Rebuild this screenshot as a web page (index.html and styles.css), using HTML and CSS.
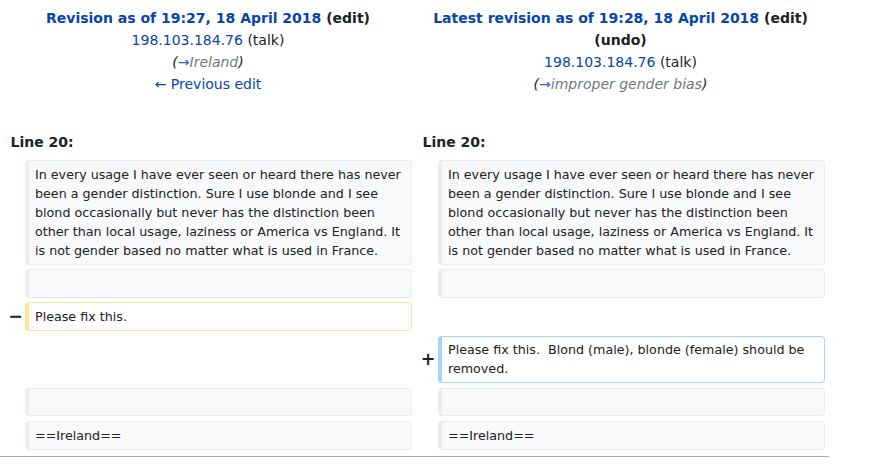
FILE: index.html
```
<!DOCTYPE html>
<html lang="en">
<head>
<meta charset="utf-8">
<title>Difference between revisions</title>
<link rel="stylesheet" href="styles.css">
</head>
<body>
<div class="diff">
  <div class="title">
    <div class="t-main"><a class="link" href="#">Revision as of 19:27, 18 April 2018</a> <span class="dark">(edit)</span></div>
    <div><a class="link" href="#">198.103.184.76</a> <span class="dark">(talk)</span></div>
    <div class="comment"><span class="dark">(</span><span class="arrow">→</span><span class="gray">Ireland</span><span class="dark">)</span></div>
    <div><a class="link" href="#">← Previous edit</a></div>
  </div>
  <div class="title">
    <div class="t-main"><a class="link" href="#">Latest revision as of 19:28, 18 April 2018</a> <span class="dark">(edit)</span></div>
    <div class="t-main"><span class="dark">(undo)</span></div>
    <div><a class="link" href="#">198.103.184.76</a> <span class="dark">(talk)</span></div>
    <div class="comment"><span class="dark">(</span><span class="arrow">→</span><span class="gray">improper gender bias</span><span class="dark">)</span></div>
  </div>

  <div class="lineno">Line 20:</div>
  <div class="lineno">Line 20:</div>

  <div class="marker"></div>
  <div class="cell context">In every usage I have ever seen or heard there has never been a gender distinction. Sure I use blonde and I see blond occasionally but never has the distinction been other than local usage, laziness or America vs England. It is not gender based no matter what is used in France.</div>
  <div class="marker"></div>
  <div class="cell context">In every usage I have ever seen or heard there has never been a gender distinction. Sure I use blonde and I see blond occasionally but never has the distinction been other than local usage, laziness or America vs England. It is not gender based no matter what is used in France.</div>

  <div class="marker"></div>
  <div class="cell context"><br></div>
  <div class="marker"></div>
  <div class="cell context"><br></div>

  <div class="marker marker-old">−</div>
  <div class="cell deleted">Please fix this.</div>
  <div class="marker"></div>
  <div class="empty"></div>

  <div class="marker"></div>
  <div class="empty"></div>
  <div class="marker marker-new">+</div>
  <div class="cell added">Please fix this.  Blond (male), blonde (female) should be removed.</div>

  <div class="marker"></div>
  <div class="cell context"><br></div>
  <div class="marker"></div>
  <div class="cell context"><br></div>

  <div class="marker"></div>
  <div class="cell context">==Ireland==</div>
  <div class="marker"></div>
  <div class="cell context">==Ireland==</div>
</div>
<div class="rule"></div>
</body>
</html>
```
FILE: styles.css
```
html, body {
  margin: 0;
  padding: 0;
  background: #ffffff;
}

body {
  font-family: "DejaVu Sans", "Liberation Sans", sans-serif;
  color: #202122;
  font-size: 14px;
}

.link {
  color: #0645ad;
  text-decoration: none;
}

.dark {
  color: #202122;
}

.diff {
  width: 821px;
  padding: 4px;
  display: grid;
  grid-template-columns: 17px 387px 18px 387px;
  column-gap: 4px;
  row-gap: 4.6px;
  align-items: center;
}

.title {
  grid-column: span 2;
  align-self: start;
  text-align: center;
  line-height: 22px;
  padding: 3px 0 31.4px;
}

.t-main {
  font-weight: bold;
}

.comment {
  font-style: italic;
}

.comment .arrow {
  color: #3366cc;
  font-style: normal;
}

.comment .gray {
  color: #72777d;
}

.lineno {
  grid-column: span 2;
  font-weight: bold;
  line-height: 22px;
  padding: 0 0 2.4px 6.5px;
}

.marker {
  font-weight: bold;
  font-size: 17.5px;
  line-height: 21px;
  text-align: right;
  margin-right: -2px;
}

.marker-new {
  margin-right: -1.5px;
}

.cell {
  box-sizing: border-box;
  font-size: 12.7px;
  line-height: 19px;
  white-space: pre-wrap;
  padding: 3.8px 6px;
  border-style: solid;
  border-width: 1px 1px 1px 4px;
  border-radius: 4px;
  align-self: stretch;
}

.context {
  background: #f8f9fa;
  border-color: #eaecf0;
  color: #202122;
}

.deleted {
  background: #ffffff;
  border-color: #ffe49c;
}

.added {
  background: #ffffff;
  border-color: #a3d3ff;
}

.empty {
  align-self: stretch;
}

.rule {
  width: 829px;
  margin-top: 2.4px;
  border-top: 1px solid #a2a9b1;
}
```
